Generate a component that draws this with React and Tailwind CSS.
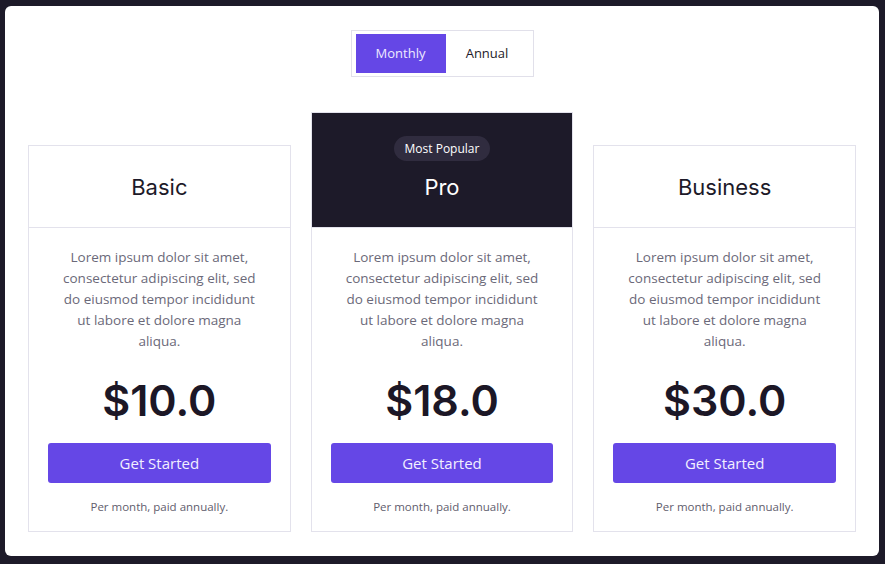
import { useState } from "react"

const plans = [
  { name: "Basic", price: "$10.0" },
  { name: "Pro", price: "$18.0", popular: true },
  { name: "Business", price: "$30.0" },
]

const blurb =
  "Lorem ipsum dolor sit amet, consectetur adipiscing elit, sed do eiusmod tempor incididunt ut labore et dolore magna aliqua."

function PlanCard({ plan }) {
  return (
    <div className="flex flex-col border border-[#e3e2ec] bg-white">
      {/* Header */}
      {plan.popular ? (
        <div className="flex flex-col items-center bg-[#1d1a29] pt-[23px] pb-6 border-b border-[#e3e2ec]">
          <span className="h-[25px] px-[11px] flex items-center rounded-full bg-[#302c3f] text-white text-[12px] font-['Open_Sans',sans-serif]">
            Most Popular
          </span>
          <h2 className="mt-[10px] text-[22px] leading-8 text-white font-['Inter',sans-serif]">{plan.name}</h2>
        </div>
      ) : (
        <div className="flex justify-center pt-[25px] pb-6 border-b border-[#e3e2ec]">
          <h2 className="text-[22px] leading-8 text-[#1d1a29] font-['Inter',sans-serif]">{plan.name}</h2>
        </div>
      )}

      {/* Body */}
      <div className="flex flex-col items-center pt-[19px] pb-[15px] px-[19px]">
        <p className="px-2 text-center text-[13.5px] leading-[21px] text-[#6b6979] font-['Open_Sans',sans-serif]">
          {blurb}
        </p>
        <div className="mt-6 text-[43px] leading-[48px] font-semibold text-[#1c1726] font-['Inter',sans-serif]">
          {plan.price}
        </div>
        <button className="mt-[19px] w-full h-10 rounded-[3px] bg-[#6547e6] text-[15px] text-[#f2efff] font-['Open_Sans',sans-serif]">
          Get Started
        </button>
        <p className="mt-[15px] text-[11.5px] leading-[18px] text-[#5f5d6d] font-['Open_Sans',sans-serif]">
          Per month, paid annually.
        </p>
      </div>
    </div>
  )
}

export default function App() {
  const [billing, setBilling] = useState("monthly")

  return (
    <div className="w-[885px] h-[564px] bg-[#1d1a29] pt-[6px] pl-[5px] pr-[6px] pb-[8px]">
      <div className="h-full bg-white rounded-md flex flex-col items-center pt-6">
        {/* Billing toggle */}
        <div className="h-[47px] flex items-center border border-[#e1e0ea] px-[4px] font-['Open_Sans',sans-serif] text-[13px]">
          <button
            onClick={() => setBilling("monthly")}
            className={`w-[90px] h-[39px] ${billing === "monthly" ? "bg-[#6547e6] text-[#eeeaff]" : "text-[#1d1a29]"}`}
          >
            Monthly
          </button>
          <button
            onClick={() => setBilling("annual")}
            className={`w-[83px] h-[39px] ${billing === "annual" ? "bg-[#6547e6] text-[#eeeaff]" : "text-[#1d1a29]"}`}
          >
            Annual
          </button>
        </div>

        {/* Plans */}
        <div className="mt-[35px] w-full px-[23px] grid grid-cols-3 gap-5 items-end">
          {plans.map(p => (
            <PlanCard key={p.name} plan={p} />
          ))}
        </div>
      </div>
    </div>
  )
}
